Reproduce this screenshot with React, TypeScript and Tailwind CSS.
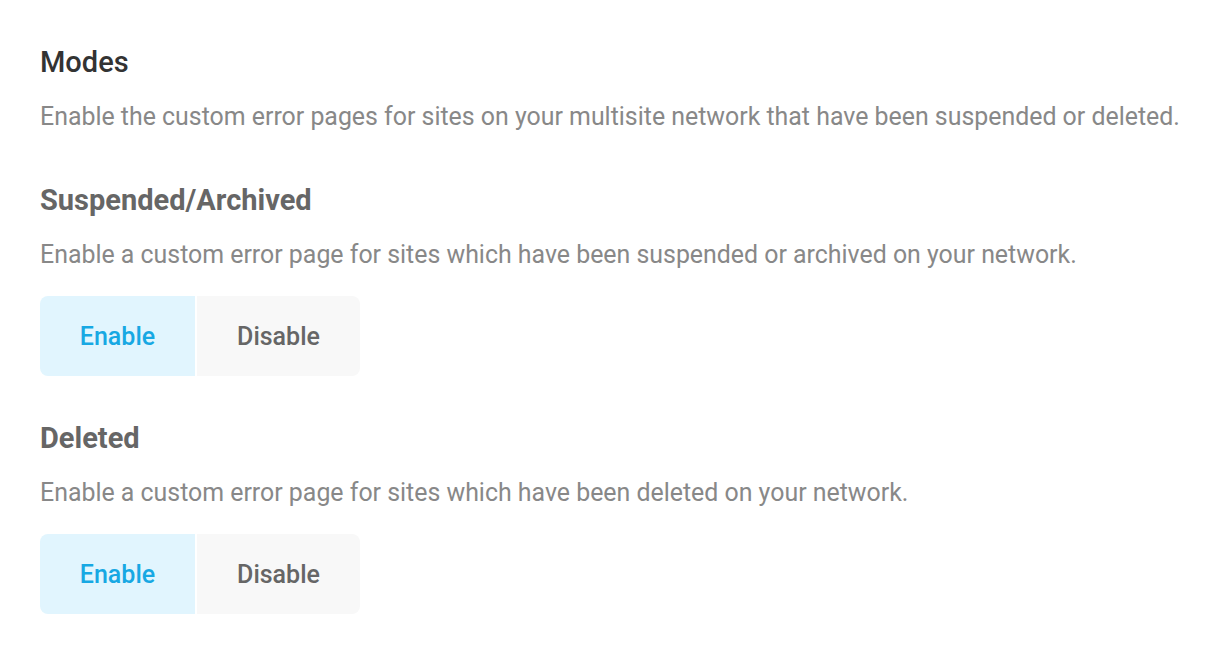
import React, { useState } from 'react';

type Mode = 'enable' | 'disable';

function Toggle({ value, onChange }: { value: Mode; onChange: (v: Mode) => void }) {
  return (
    <div className="flex h-[80px] w-[320px] gap-[2px] overflow-hidden rounded-[8px]">
      <button
        type="button"
        onClick={() => onChange('enable')}
        className={`w-[155px] pt-[2px] text-[25px] font-medium ${value === 'enable' ? 'bg-[#e1f5fe] text-[#17a8e3]' : 'bg-[#f8f8f8] text-[#666666]'}`}
      >
        Enable
      </button>
      <button
        type="button"
        onClick={() => onChange('disable')}
        className={`flex-1 pt-[2px] text-[25px] font-medium ${value === 'disable' ? 'bg-[#e1f5fe] text-[#17a8e3]' : 'bg-[#f8f8f8] text-[#666666]'}`}
      >
        Disable
      </button>
    </div>
  );
}

export default function App() {
  const [suspended, setSuspended] = useState<Mode>('enable');
  const [deleted, setDeleted] = useState<Mode>('enable');

  return (
    <div className="min-h-screen bg-white px-[40px] pt-[42px] font-['Roboto',sans-serif]">
      <h2 className="text-[29px] font-medium leading-[40px] text-[#333333]">Modes</h2>
      <p className="mt-[19px] whitespace-nowrap text-[24.9px] leading-[32px] text-[#888888]">
        Enable the custom error pages for sites on your multisite network that have been suspended or deleted.
      </p>

      <h3 className="mt-[47px] text-[29px] font-bold leading-[40px] text-[#666666]">Suspended/Archived</h3>
      <p className="mt-[19px] whitespace-nowrap text-[24.9px] leading-[32px] text-[#888888]">
        Enable a custom error page for sites which have been suspended or archived on your network.
      </p>
      <div className="mt-[25px]">
        <Toggle value={suspended} onChange={setSuspended} />
      </div>

      <h3 className="mt-[42px] text-[29px] font-bold leading-[40px] text-[#666666]">Deleted</h3>
      <p className="mt-[19px] whitespace-nowrap text-[24.9px] leading-[32px] text-[#888888]">
        Enable a custom error page for sites which have been deleted on your network.
      </p>
      <div className="mt-[25px]">
        <Toggle value={deleted} onChange={setDeleted} />
      </div>
    </div>
  );
}
